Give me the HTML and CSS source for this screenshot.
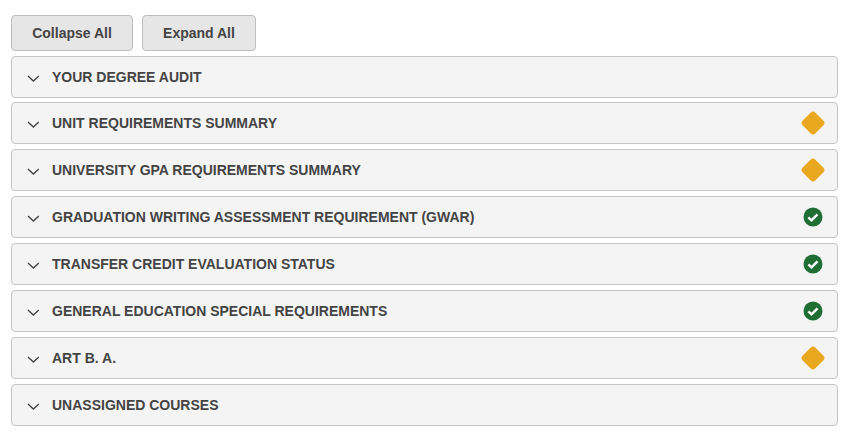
FILE: index.html
```html
<!DOCTYPE html>
<html lang="en">
<head>
	<meta charset="UTF-8">
	<title>Degree Audit</title>
	<link rel="stylesheet" href="styles.css">
</head>
<body>
	<svg class="defs" width="0" height="0">
		<symbol id="chevron" viewBox="0 0 12 7"><path d="M1 1l5.4 5 5.4-5" fill="none" stroke="#404040" stroke-width="1.3"/></symbol>
		<symbol id="diamond" viewBox="0 0 24 24"><rect x="3" y="3" width="18" height="18" rx="3.5" transform="rotate(45 12 12)" fill="#e9a81f"/></symbol>
		<symbol id="check" viewBox="0 0 20 20"><circle cx="10" cy="10" r="9.5" fill="#1f6e33"/><path d="M5.4 10.3l3.1 3 6-6" fill="none" stroke="#fff" stroke-width="2.5"/></symbol>
	</svg>

	<div class="toolbar">
		<button class="btn btn-collapse">Collapse All</button>
		<button class="btn btn-expand">Expand All</button>
	</div>

	<div class="accordion">
		<div class="row"><svg class="chevron"><use href="#chevron"/></svg><span class="title">YOUR DEGREE AUDIT</span></div>
		<div class="row"><svg class="chevron"><use href="#chevron"/></svg><span class="title">UNIT REQUIREMENTS SUMMARY</span><svg class="diamond"><use href="#diamond"/></svg></div>
		<div class="row"><svg class="chevron"><use href="#chevron"/></svg><span class="title">UNIVERSITY GPA REQUIREMENTS SUMMARY</span><svg class="diamond"><use href="#diamond"/></svg></div>
		<div class="row"><svg class="chevron"><use href="#chevron"/></svg><span class="title">GRADUATION WRITING ASSESSMENT REQUIREMENT (GWAR)</span><svg class="check"><use href="#check"/></svg></div>
		<div class="row"><svg class="chevron"><use href="#chevron"/></svg><span class="title">TRANSFER CREDIT EVALUATION STATUS</span><svg class="check"><use href="#check"/></svg></div>
		<div class="row"><svg class="chevron"><use href="#chevron"/></svg><span class="title">GENERAL EDUCATION SPECIAL REQUIREMENTS</span><svg class="check"><use href="#check"/></svg></div>
		<div class="row"><svg class="chevron"><use href="#chevron"/></svg><span class="title">ART B. A.</span><svg class="diamond"><use href="#diamond"/></svg></div>
		<div class="row"><svg class="chevron"><use href="#chevron"/></svg><span class="title">UNASSIGNED COURSES</span></div>
	</div>
</body>
</html>
```

FILE: styles.css
```css
body {
    margin: 0;
    padding: 15px 13px 0 11px;
    background-color: #fff;
    font-family: "Liberation Sans", Arial, sans-serif;
    color: #444;
}
.defs {
    position: absolute;
}
.toolbar {
    display: flex;
    gap: 9px;
    margin-bottom: 5px;
}
.btn {
    height: 36px;
    padding: 0;
    background-color: #e6e6e6;
    border: 1px solid #bdbdbd;
    border-radius: 4px;
    color: #444;
    font-family: inherit;
    font-size: 14px;
    font-weight: bold;
}
.btn-collapse {
    width: 122px;
}
.btn-expand {
    width: 114px;
}
.accordion {
    display: flex;
    flex-direction: column;
    gap: 5px;
}
.row {
    display: flex;
    align-items: center;
    height: 42px;
    box-sizing: border-box;
    padding: 0 13px 0 15px;
    background-color: #f4f4f4;
    border: 1px solid #c4c4c4;
    border-radius: 4px;
}
.row:first-child {
    margin-bottom: -1px;
}
.chevron {
    width: 12px;
    height: 7px;
    margin-right: 13px;
    margin-top: 2px;
    flex: none;
}
.title {
    flex: 1;
    font-size: 14px;
    font-weight: bold;
}
.diamond {
    width: 24px;
    height: 24px;
    margin-right: -1px;
    flex: none;
}
.check {
    width: 20px;
    height: 20px;
    margin-right: 1px;
    flex: none;
}
```
